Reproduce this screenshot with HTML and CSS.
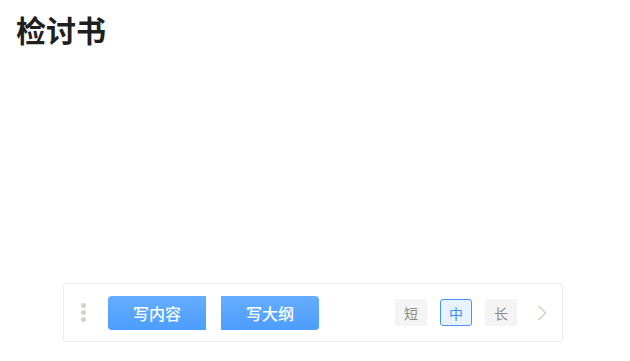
FILE: index.html
```html
<!DOCTYPE html>
<html lang="zh">
<head>
<meta charset="utf-8">
<link rel="stylesheet" href="styles.css">
</head>
<body>
<div class="page">
  <h1 class="title">检讨书</h1>
  <div class="toolbar">
    <div class="handle"><span></span><span></span><span></span></div>
    <div class="actions">
      <button class="btn btn-left">写内容</button>
      <button class="btn btn-right">写大纲</button>
    </div>
    <div class="lengths">
      <span class="len">短</span>
      <span class="len active">中</span>
      <span class="len">长</span>
    </div>
    <svg class="chev" width="10" height="16" viewBox="0 0 10 16"><path d="M1.5 1 L8.5 8 L1.5 15" fill="none" stroke="#d6cfc8" stroke-width="1.6"/></svg>
  </div>
</div>
</body>
</html>
```

FILE: styles.css
```css
html, body {
  margin: 0;
  padding: 0;
  background: #fff;
}
.page {
  height: 361px;
  display: flex;
  flex-direction: column;
  font-family: "Noto Sans CJK SC", "Noto Sans", sans-serif;
}
.title {
  margin: 8px 0 0 16px;
  font-size: 30px;
  line-height: 42px;
  font-weight: 700;
  color: #1f1f1f;
}
.toolbar {
  margin: auto 0 19px 63px;
  width: 500px;
  height: 59px;
  box-sizing: border-box;
  border: 1px solid #ececec;
  border-radius: 3px;
  display: flex;
  align-items: center;
  padding-left: 17px;
  padding-right: 15px;
}
.handle {
  display: flex;
  flex-direction: column;
  gap: 2px;
  width: 5px;
}
.handle span {
  width: 5px;
  height: 5px;
  border-radius: 50%;
  background: #d8d1ca;
}
.actions {
  display: flex;
  gap: 15px;
  margin-left: 22px;
}
.btn {
  width: 98px;
  height: 34px;
  border: none;
  background: linear-gradient(#65adff, #4c9dfd);
  color: #fff;
  font-family: "Noto Sans CJK SC", sans-serif;
  font-size: 16px;
  font-weight: 500;
  padding: 0;
}
.btn-left { border-radius: 4px 0 0 4px; }
.btn-right { border-radius: 0 4px 4px 0; }
.lengths {
  display: flex;
  gap: 13px;
  margin-left: auto;
}
.len {
  width: 32px;
  height: 27px;
  box-sizing: border-box;
  display: flex;
  align-items: center;
  justify-content: center;
  background: #f4f4f4;
  color: #8a8a8a;
  font-size: 14px;
  border-radius: 2px;
}
.len.active {
  background: #e8f2ff;
  border: 1px solid #4a95f0;
  color: #3f8ff5;
  border-radius: 3px;
}
.chev {
  margin-left: 20px;
  display: block;
}
```
